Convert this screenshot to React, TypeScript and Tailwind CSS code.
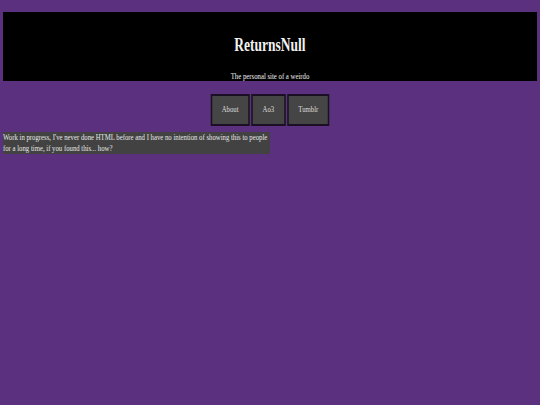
import React from 'react';

// The reference reads as a page squeezed sideways, so the page is laid out
// 720px wide and compressed to the 540px window.
const links = ['About', 'Ao3', 'Tumblr'];

export default function App() {
    return (
        <div className="w-[540px] h-[405px] overflow-hidden bg-[#5b317f] font-['Liberation_Serif',serif]">
            <div className="w-[720px] h-[405px] origin-top-left scale-x-75">
                <header className="mx-[4px] mt-[12px] h-[69px] bg-black pt-[23.5px] text-center text-[#f2f2f2]">
                    <h1 className="text-[18px] font-bold leading-[18px]">ReturnsNull</h1>
                    <p className="mt-[18px] text-[9px] leading-[9px]">The personal site of a weirdo</p>
                </header>

                <nav className="mt-[13px] flex justify-center gap-[2px]">
                    {links.map((link) => (
                        <button
                            key={link}
                            className="h-[32px] px-[13px] border-2 border-[#1a0f24] bg-[#454545] text-[9px] text-[#dedede]"
                        >
                            {link}
                        </button>
                    ))}
                </nav>

                <p className="mt-[6px] ml-[4px] w-[356px] bg-[#424242] text-[9px] leading-[11px] text-[#e8e8e8]">
                    Work in progress, I've never done HTML before and I have no intention of showing this to people
                    for a long time, if you found this... how?
                </p>
            </div>
        </div>
    );
}
